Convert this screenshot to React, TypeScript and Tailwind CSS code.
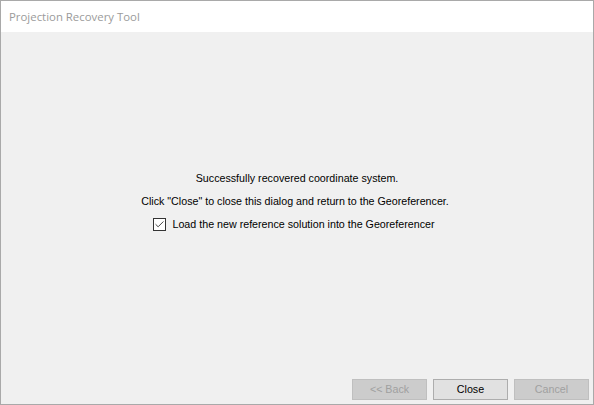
import { Check } from 'lucide-react';

export default function App() {
  return (
    <div className="w-[594px] h-[405px] bg-[#f0f0f0] border border-[#a9a9a9] flex flex-col font-['Liberation_Sans',Arial,sans-serif] text-[10.7px] text-black">
      {/* Title bar */}
      <div className="h-[31px] bg-white flex items-center pl-[8px] shrink-0">
        <span className="font-['Open_Sans','Noto_Sans',sans-serif] text-[11.4px] text-[#9b9b9b]">Projection Recovery Tool</span>
      </div>

      {/* Message */}
      <div className="flex-1 flex flex-col items-center pt-[139px]">
        <p className="leading-[14px]">Successfully recovered coordinate system.</p>
        <p className="leading-[14px] mt-[9px] -ml-[4px]">Click "Close" to close this dialog and return to the Georeferencer.</p>
        <label className="flex items-center gap-[6px] mt-[9px] -ml-[6px]">
          <span className="w-[13px] h-[13px] border border-[#333] bg-white flex items-center justify-center">
            <Check className="w-[11px] h-[11px] text-[#333]" strokeWidth={2} />
          </span>
          <span className="leading-[14px]">Load the new reference solution into the Georeferencer</span>
        </label>
      </div>

      {/* Buttons */}
      <div className="flex justify-end gap-[6px] pr-[4px] pb-[4px]">
        <button className="w-[75px] h-[21px] bg-[#cccccc] border border-[#bfbfbf] text-[#a0a0a0]">&lt;&lt; Back</button>
        <button className="w-[75px] h-[21px] bg-[#e1e1e1] border border-[#adadad]">Close</button>
        <button className="w-[75px] h-[21px] bg-[#cccccc] border border-[#bfbfbf] text-[#a0a0a0]">Cancel</button>
      </div>
    </div>
  );
}
